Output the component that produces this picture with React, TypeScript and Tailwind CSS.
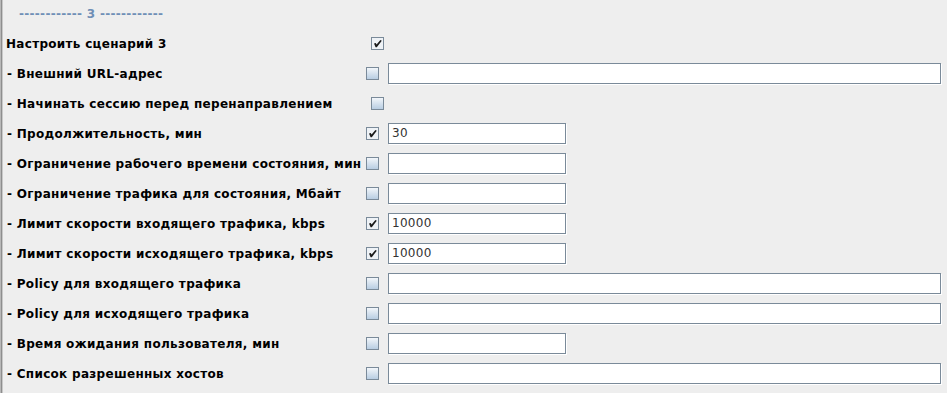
import React from "react";

type Row = {
  label: string;
  checked: boolean;
  field?: "long" | "short";
  value?: string;
};

const rows: Row[] = [
  { label: "- Внешний URL-адрес", checked: false, field: "long" },
  { label: "- Начинать сессию перед перенаправлением", checked: false },
  { label: "- Продолжительность, мин", checked: true, field: "short", value: "30" },
  { label: "- Ограничение рабочего времени состояния, мин", checked: false, field: "short" },
  { label: "- Ограничение трафика для состояния, Мбайт", checked: false, field: "short" },
  { label: "- Лимит скорости входящего трафика, kbps", checked: true, field: "short", value: "10000" },
  { label: "- Лимит скорости исходящего трафика, kbps", checked: true, field: "short", value: "10000" },
  { label: "- Policy для входящего трафика", checked: false, field: "long" },
  { label: "- Policy для исходящего трафика", checked: false, field: "long" },
  { label: "- Время ожидания пользователя, мин", checked: false, field: "short" },
  { label: "- Список разрешенных хостов", checked: false, field: "long" },
];

// Metal-style checkbox
function Check({ checked }: { checked: boolean }) {
  return (
    <div
      className={`w-[13px] h-[13px] border border-[#7a8a99] shrink-0 relative ${
        checked ? "bg-[#eef2f6]" : "bg-gradient-to-b from-[#f2f6fa] to-[#b8cde2]"
      }`}
    >
      {checked && (
        <svg className="absolute left-0 top-0" width="11" height="11" viewBox="0 0 11 11">
          <path d="M2 5.5 L3.8 5 L4.6 6.6 L8.4 2 L9.8 2.8 L4.8 9.2 L3.6 9.2 Z" fill="#1a1a1a" />
        </svg>
      )}
    </div>
  );
}

function Field({ size, value }: { size: "long" | "short"; value?: string }) {
  return (
    <div
      className={`h-[21px] bg-white border border-[#7a8a99] shadow-[1px_1px_0_#fff] flex items-center pl-[3px] text-[12px] text-[#333] tracking-[0.3px] ${
        size === "long" ? "w-[553px]" : "w-[178px]"
      }`}
    >
      {value}
    </div>
  );
}

export default function App() {
  return (
    <div className="w-[947px] h-[393px] bg-[#eeeeee] flex overflow-hidden font-['DejaVu_Sans',sans-serif]">
      {/* left panel edge */}
      <div className="w-[3px] shrink-0 flex">
        <div className="w-[1px] bg-[#b8b8b8]" />
        <div className="w-[1px] bg-[#8e8e8e]" />
        <div className="w-[1px] bg-[#c8c8c8]" />
      </div>
      <div className="flex-1 flex flex-col tracking-[0.3px]">
        <div className="h-[28px] flex items-center pl-[16px] text-[12px] font-bold text-[#6f8fb6] pb-[1px]">
          ------------ 3 ------------
        </div>
        <div className="h-[30px] flex items-center pt-[1px]">
          <div className="w-[368px] pl-[3px] text-[12px] font-bold text-black">Настроить сценарий 3</div>
          <Check checked />
        </div>
        {rows.map((r) => (
          <div key={r.label} className="h-[30px] flex items-center">
            <div className="w-[363px] pl-[4px] pt-[1px] text-[12px] font-bold text-black whitespace-nowrap">{r.label}</div>
            {r.field ? (
              <>
                <Check checked={r.checked} />
                <div className="ml-[9px]">
                  <Field size={r.field} value={r.value} />
                </div>
              </>
            ) : (
              <div className="ml-[5px]">
                <Check checked={r.checked} />
              </div>
            )}
          </div>
        ))}
      </div>
    </div>
  );
}
